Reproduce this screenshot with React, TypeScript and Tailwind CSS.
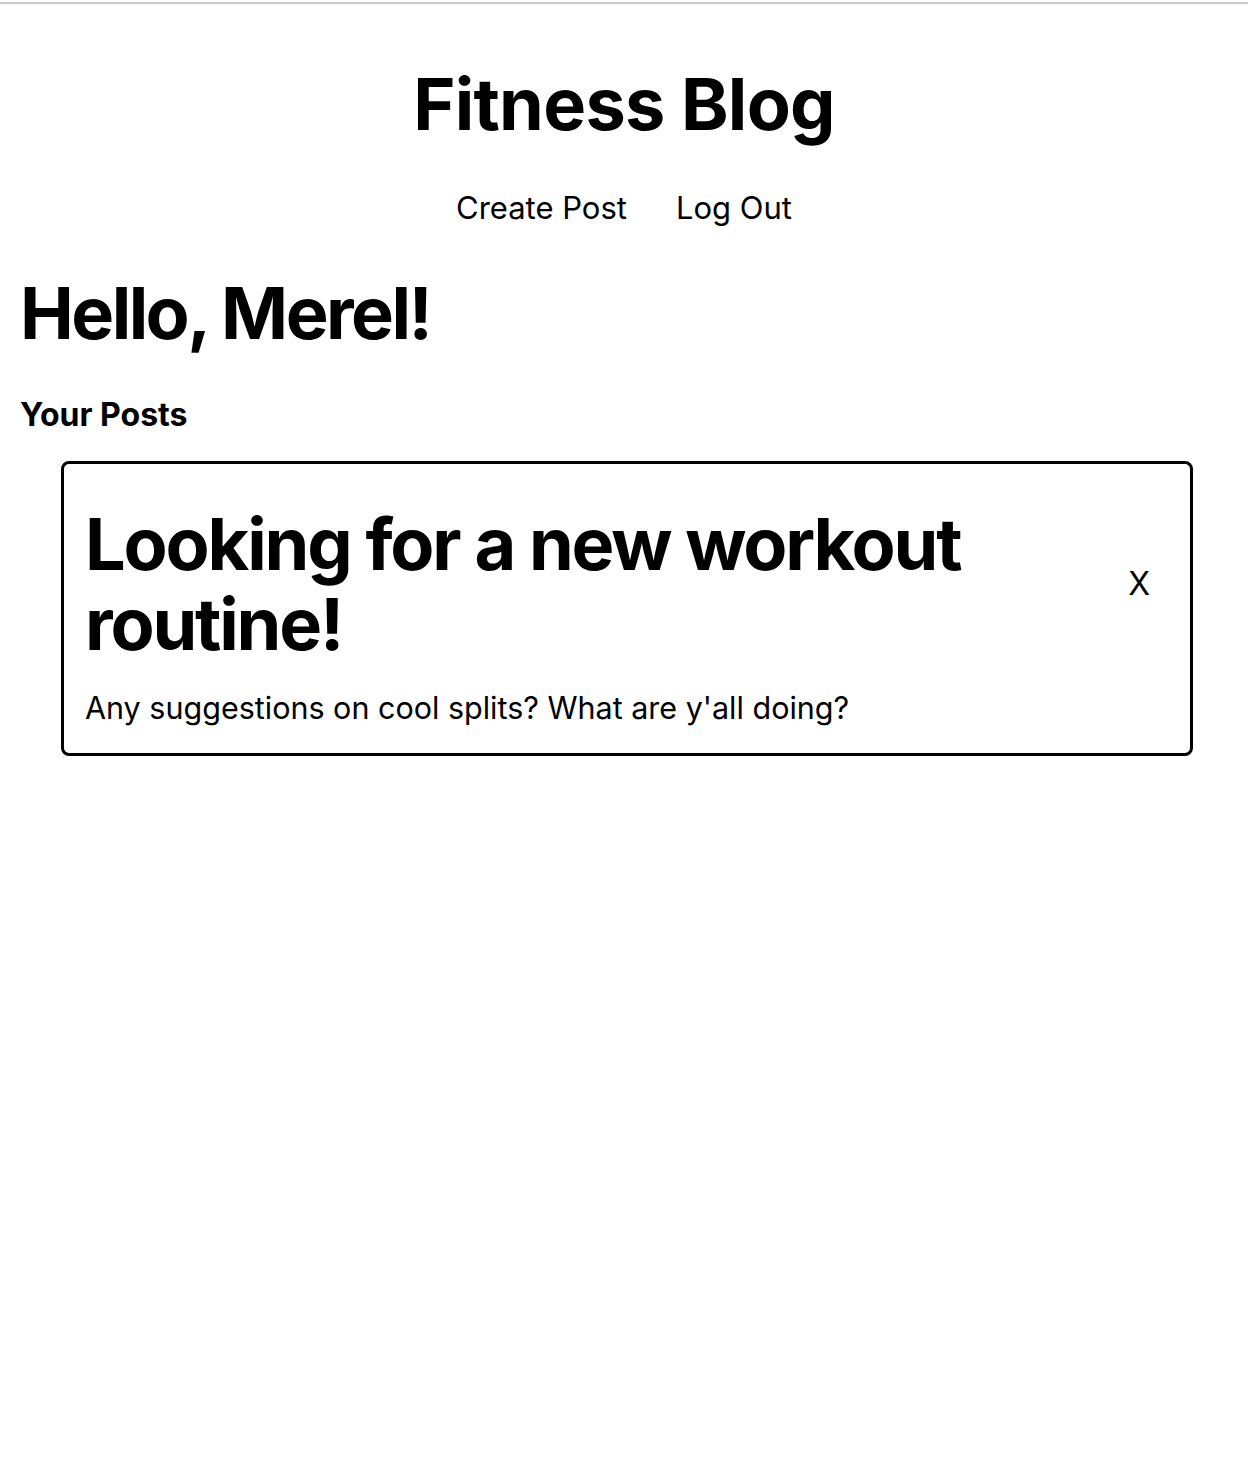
export default function App() {
  return (
    <div className="min-h-screen bg-white text-black" style={{ fontFamily: "Inter, 'Noto Sans', sans-serif" }}>
      <div className="pt-[2px]">
        <div className="h-[2px] bg-[#cccccc]" />
      </div>

      {/* Header */}
      <header className="flex flex-col items-center pt-[64px]">
        <h1 className="text-[72px] leading-[72px] font-bold tracking-[-0.01em]">Fitness Blog</h1>
        <nav className="mt-[50px] flex gap-[49px] text-[31px] leading-[36px]">
          <a href="#">Create Post</a>
          <a href="#">Log Out</a>
        </nav>
      </header>

      <main className="px-5 pt-[51px]">
        <h2 className="text-[72px] leading-[72px] font-bold tracking-[-0.035em]">Hello, Merel!</h2>
        <h3 className="mt-[48px] text-[32px] leading-[36px] font-bold">Your Posts</h3>

        <div className="mt-[28px] ml-[41px] mr-[35px] border-[3px] border-black rounded-lg px-[21px] pt-[40px] pb-[27px]">
          <div className="flex items-center justify-between">
            <h4 className="text-[72px] leading-[80px] font-bold tracking-[-0.03em] max-w-[980px]">
              Looking for a new workout routine!
            </h4>
            <button className="mr-[19px] text-[32px]">X</button>
          </div>
          <p className="mt-[26px] text-[30.5px] leading-[36px]">Any suggestions on cool splits? What are y'all doing?</p>
        </div>
      </main>
    </div>
  );
}
